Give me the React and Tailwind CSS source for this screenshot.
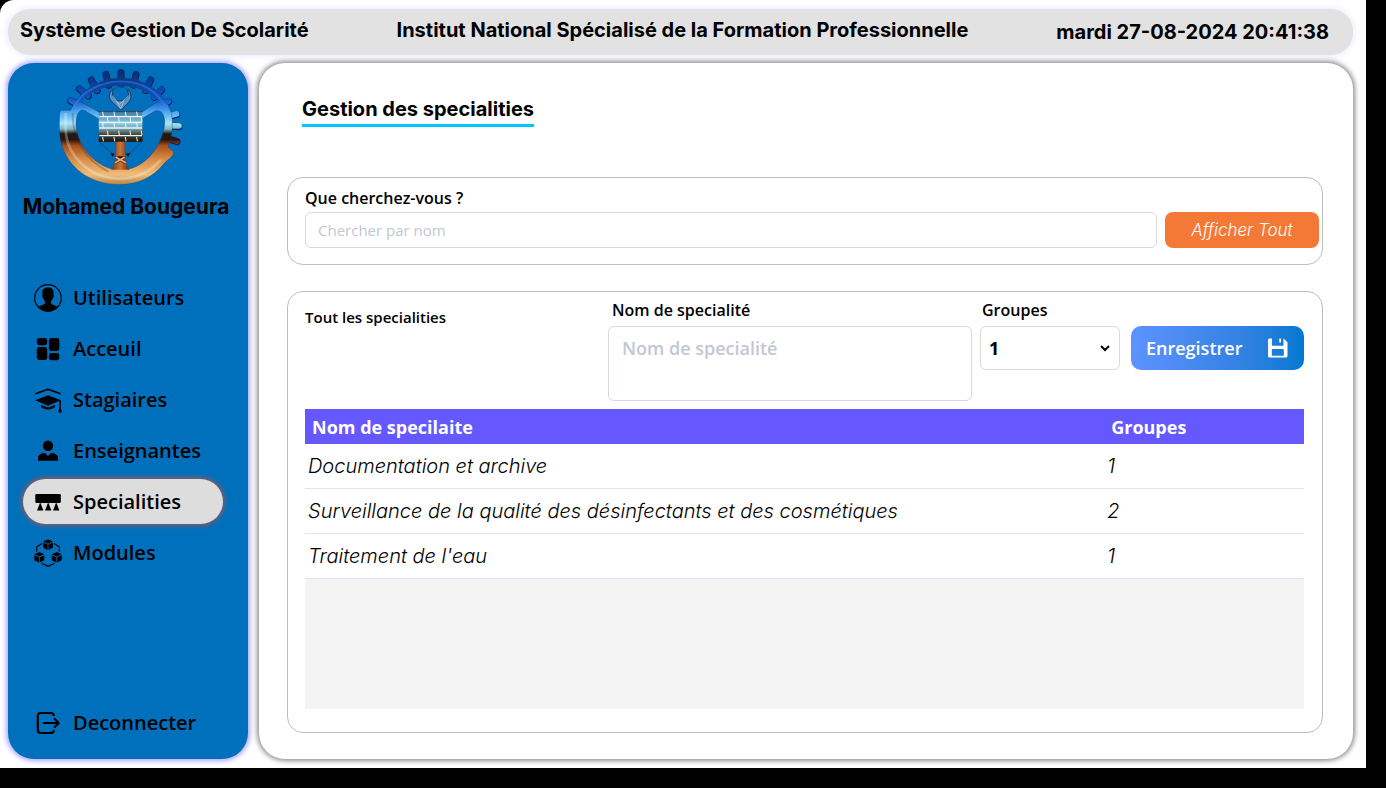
import { useState } from "react";

const gothic = "font-['Century_Gothic','Inter',sans-serif]";

const specialities = [
  { name: "Documentation et archive", groups: 1 },
  { name: "Surveillance de la qualité des désinfectants et des cosmétiques", groups: 2 },
  { name: "Traitement de l'eau", groups: 1 },
];

const teeth = [
  [62, 113, 92, 128], [88, 77, 114, 98], [124, 50, 141, 82], [168, 33, 175, 66],
  [213, 28, 213, 62], [258, 34, 250, 66], [302, 50, 286, 82], [335, 80, 312, 102],
  [356, 115, 330, 128], [380, 153, 352, 160], [387, 190, 358, 188], [381, 235, 352, 226],
];

const bricks = [150, 167, 184, 207, 226];

function Logo() {
  return (
    <svg viewBox="0 0 420 390" className="mr-4 h-[130px] w-[140px]" role="img" aria-label="Logo">
      <defs>
        <linearGradient id="metal" gradientUnits="userSpaceOnUse" x1="0" y1="20" x2="0" y2="370">
          <stop offset="0" stopColor="#0b2a66" />
          <stop offset="0.12" stopColor="#0a3f9c" />
          <stop offset="0.26" stopColor="#1258cc" />
          <stop offset="0.36" stopColor="#4aa4ee" />
          <stop offset="0.46" stopColor="#a5e6fa" />
          <stop offset="0.51" stopColor="#7fb3c0" />
          <stop offset="0.55" stopColor="#1d1a16" />
          <stop offset="0.6" stopColor="#2b150a" />
          <stop offset="0.65" stopColor="#a5501d" />
          <stop offset="0.76" stopColor="#d58a45" />
          <stop offset="0.9" stopColor="#f0bd7c" />
          <stop offset="1" stopColor="#a87a45" />
        </linearGradient>
        <linearGradient id="wall" gradientUnits="userSpaceOnUse" x1="0" y1="145" x2="0" y2="236">
          <stop offset="0" stopColor="#3f7397" />
          <stop offset="0.4" stopColor="#8fd0ea" />
          <stop offset="0.6" stopColor="#6d97a0" />
          <stop offset="0.75" stopColor="#4c4a3c" />
          <stop offset="1" stopColor="#17150f" />
        </linearGradient>
        <linearGradient id="trunk" x1="0" y1="0" x2="1" y2="0">
          <stop offset="0" stopColor="#7a3413" />
          <stop offset="0.5" stopColor="#c8763a" />
          <stop offset="1" stopColor="#6a2d10" />
        </linearGradient>
      </defs>
      {teeth.map(([x1, y1, x2, y2]) => (
        <g key={`${x1}-${y1}`} strokeLinecap="round">
          <line x1={x1} y1={y1 + 1} x2={x2 + 1} y2={y2 + 1} stroke="#0a2352" strokeWidth="21" />
          <line x1={x1} y1={y1 - 1} x2={x2} y2={y2} stroke="url(#metal)" strokeWidth="17" />
        </g>
      ))}
      <path
        fillRule="evenodd"
        fill="url(#metal)"
        stroke="#1b3f63"
        strokeOpacity="0.6"
        strokeWidth="2"
        d="M33 142 H62 C86 86 145 46 212 45 C285 46 344 86 364 150 C370 180 368 215 354 252 L371 265 C372 282 352 290 340 304 C308 344 262 365 207 365 C112 365 28 300 28 195 C28 170 28 142 33 142 Z
           M92 116 C120 84 160 68 210 68 C258 68 298 84 326 114 L278 146 H145 Z
           M88 146 C78 154 76 185 80 202 C90 255 132 302 184 318 C196 312 200 292 198 236 H148 V168 L112 148 C104 141 94 140 88 146 Z
           M338 152 C330 140 318 142 308 148 L277 166 V236 H225 C222 292 226 312 238 318 C288 304 322 262 338 212 C346 188 346 166 338 152 Z"
      />
      <path d="M70 132 C96 86 150 56 212 55 C275 56 325 84 350 140" fill="none" stroke="#3c8cf0" strokeOpacity="0.45" strokeWidth="5" />
      <path d="M47 150 V200 C50 280 120 346 207 347 C262 347 302 326 332 290" fill="none" stroke="#fff" strokeOpacity="0.28" strokeWidth="8" />
      <path d="M68 150 C66 225 105 290 175 326" fill="none" stroke="#3b1c0a" strokeOpacity="0.25" strokeWidth="6" />
      <path d="M198 232 H225 C221 270 224 302 238 320 H184 C198 304 201 270 198 232 Z" fill="url(#trunk)" />
      <rect x="146" y="145" width="131" height="91" fill="url(#wall)" />
      <path d="M146 145 H277" stroke="#27445e" strokeWidth="3" />
      {bricks.map((y, row) => (
        <g key={y} stroke="#eaf8ff" strokeWidth="4">
          {row < 4 && <line x1="148" x2="276" y1={y + 11} y2={y + 11} />}
          {[0, 1, 2, 3].map((c) => {
            const x = 158 + c * 34 + (row % 2) * 14;
            return <line key={c} x1={x} x2={x + 2} y1={y - 4} y2={y + 9} strokeWidth="3" />;
          })}
        </g>
      ))}
      <path d="M188 80 L213 68 L237 82" fill="none" stroke="#24486f" strokeWidth="2" />
      <path
        d="M189 78 C174 92 174 108 190 120 L208 138 H216 L233 121 C247 108 246 92 232 78 L236 98 L222 113 L200 114 L187 98 Z"
        fill="#5c8fc4"
        stroke="#1d3a63"
        strokeWidth="3"
      />
      <path d="M187 98 L208 124 L236 98 M200 114 L212 138 L222 113" fill="none" stroke="#b9d6ee" strokeWidth="2" />
      <path d="M148 238 L188 272 L207 292 M275 238 L238 272 L215 292" fill="none" stroke="#1c3c5e" strokeWidth="2" />
      <path d="M180 270 L194 272 L188 281 Z M227 272 L241 270 L235 281 Z M204 280 H218 V290 H204 Z" fill="#160d08" />
      <path d="M195 299 L224 283 M197 283 L228 299" stroke="#4b200c" strokeWidth="9" />
      <path d="M195 299 L224 283 M197 283 L228 299" stroke="#eeb278" strokeWidth="5" />
    </svg>
  );
}

const Icon = ({ children }) => (
  <svg viewBox="0 0 28 28" className="size-7 shrink-0" fill="currentColor" aria-hidden="true">
    {children}
  </svg>
);

function UserIcon() {
  return (
    <Icon>
      <circle cx="14" cy="14" r="13.3" fill="none" stroke="currentColor" strokeWidth="1.2" />
      <path d="M14 3.6c3.3 0 5.6 1.8 5.6 5 0 1.1-.1 1.6-.1 2.2.6.3.5 2.6-.6 3.1-.4 1.500-1 2.300-1.800 3v2.600c1.200 1.500 4.700 1.700 7 3.600A13.300 13.300 0 0 1 14 27.400 13.300 13.300 0 0 1 3.900 23.100c2.300-1.900 5.800-2.100 7-3.600v-2.600c-.8-.7-1.400-1.500-1.800-3-1.100-.5-1.200-2.800-.6-3.100 0-.6-.1-1.100-.1-2.200 0-3.200 2.300-5 5.600-5Z" />
    </Icon>
  );
}

function HomeIcon() {
  return (
    <Icon>
      <rect x="2.800" y="3" width="10.400" height="7.200" rx="2.400" />
      <rect x="2.800" y="12" width="10.400" height="13" rx="2.400" />
      <rect x="14.900" y="3" width="10.400" height="13" rx="2.400" />
      <rect x="14.900" y="18" width="10.400" height="7.200" rx="2.400" />
    </Icon>
  );
}

function StudentIcon() {
  return (
    <Icon>
      <path d="M1.500 7.800 14 3.300l12.600 4.500" fill="none" stroke="currentColor" strokeWidth="1.600" strokeLinejoin="round" />
      <path d="M1.200 14.300 14 9.200l12.800 5.100L14 19.700Z" />
      <path d="M7 18.900 14 21.500l7-2.600v2.200c-1.600 1.500-4 2.400-7 2.400s-5.400-.9-7-2.400Z" />
      <path d="M25.300 14.200h1.500v8.300l1 3.100c-.3.900-1 1.400-1.700 1.400s-1.400-.5-1.800-1.400l1-3.100Z" />
    </Icon>
  );
}

function TeacherIcon() {
  return (
    <Icon>
      <circle cx="14" cy="8.700" r="5.200" />
      <path d="M4 23.700v-2.800c0-2.900 3.600-4.900 6.600-5.100L14 19l3.400-3.200c3 .2 6.600 2.200 6.600 5.100v2.800Z" />
    </Icon>
  );
}

function SpecialityIcon() {
  return (
    <Icon>
      <rect x="1.300" y="6" width="25.500" height="9" rx="1.200" />
      <path d="M6.200 14.200 9.400 22.500H3Z M14.200 14.200l3.200 8.300H11Z M22.200 14.200l3.200 8.300H19Z" />
    </Icon>
  );
}

function Cube({ x, y }) {
  return (
    <g transform={`translate(${x} ${y})`}>
      <path d="M5 0l4.900 2.200L5 4.400.1 2.200Z" />
      <path d="M0 3.300l4.600 2v5.300L0 8.300Z" />
      <path d="M10 3.300l-4.600 2v5.300l4.600-2.300Z" />
    </g>
  );
}

function ModulesIcon() {
  return (
    <Icon>
      <path d="M8 4.500 2.700 7.700v5M20 4.500l5.300 3.200v5M7.500 24.200 14 27.300l6.500-3.100" fill="none" stroke="currentColor" strokeWidth="1.100" />
      <Cube x={9} y={0.300} />
      <Cube x={0.300} y={13} />
      <Cube x={17.700} y={13} />
    </Icon>
  );
}

function LogoutIcon() {
  return (
    <Icon>
      <g fill="none" stroke="currentColor" strokeWidth="2.200" strokeLinecap="round" strokeLinejoin="round">
        <path d="M19.800 6.200C19.500 4.500 18.500 4 16.500 4H7C4.800 4 3.800 5 3.800 7.200v13.600C3.800 23 4.800 24 7 24h9.500c2 0 3-.5 3.300-2.200" />
        <path d="M9.800 14H24.500M20.700 10l4 4-4 4" />
      </g>
    </Icon>
  );
}

const nav = [
  { label: "Utilisateurs", icon: UserIcon },
  { label: "Acceuil", icon: HomeIcon },
  { label: "Stagiaires", icon: StudentIcon },
  { label: "Enseignantes", icon: TeacherIcon },
  { label: "Specialities", icon: SpecialityIcon, active: true },
  { label: "Modules", icon: ModulesIcon },
];

function NavLink({ label, icon: Glyph, active }) {
  return (
    <a
      href="#"
      aria-current={active ? "page" : undefined}
      className={`flex h-[45px] w-[200px] items-center gap-[11px] rounded-full pl-[11px] text-xl font-semibold ${
        active ? "bg-[#dddddd] shadow-[0_0_4px_2px_#7d5a68]" : ""
      }`}
    >
      <Glyph />
      {label}
    </a>
  );
}

function Sidebar() {
  return (
    <aside className="flex w-60 shrink-0 flex-col rounded-[26px] bg-[#0070bd] pb-[14px] shadow-[0_0_5px_2px_#a9a6ff]">
      <div className="flex flex-col items-center">
        <Logo />
        <p className={`${gothic} mr-1 text-[21px] leading-7 font-bold whitespace-nowrap`}>Mohamed Bougeura</p>
      </div>
      <nav className="mt-[54px] flex flex-1 flex-col gap-[6px] pl-[15px]">
        {nav.map((item) => (
          <NavLink key={item.label} {...item} />
        ))}
        <div className="mt-auto">
          <NavLink label="Deconnecter" icon={LogoutIcon} />
        </div>
      </nav>
    </aside>
  );
}

export default function App() {
  const [query, setQuery] = useState("");
  const rows = specialities.filter((s) => s.name.toLowerCase().includes(query.toLowerCase()));

  return (
    <div className="flex min-h-screen bg-black pr-5 pb-5 font-['Segoe_UI','Open_Sans',sans-serif] text-black">
      <div className="flex min-w-0 flex-1 flex-col gap-2 rounded-tl-[14px] bg-white pt-[9px] pr-[13px] pb-[9px] pl-2">
        <header
          className={`${gothic} flex h-[46px] items-center justify-between rounded-[22px] bg-[#e2e2e2] pr-6 pl-3 text-xl font-bold whitespace-nowrap shadow-[0_0_6px_2px_#eef0ff]`}
        >
          <span className="pb-1">Système Gestion De Scolarité</span>
          <span className="pb-1">Institut National Spécialisé de la Formation Professionnelle</span>
          <time>mardi 27-08-2024 20:41:38</time>
        </header>

        <div className="flex flex-1 gap-[11px]">
          <Sidebar />

          <main className="flex min-w-0 flex-1 flex-col rounded-[26px] bg-white pt-[33px] pr-[30px] pb-[26px] pl-7 shadow-[0_0_5px_2px_#8f8f8f]">
            <h1 className={`${gothic} ml-[15px] w-[232px] border-b-[3px] border-[#00c8ff] pb-[2px] text-xl leading-[26px] font-bold whitespace-nowrap`}>
              Gestion des specialities
            </h1>

            <section className="mt-[50px] rounded-2xl border border-[#bdbdbd] pt-2 pr-[3px] pb-4 pl-[17px]">
              <label htmlFor="search" className="block text-base leading-6 font-semibold">
                Que cherchez-vous ?
              </label>
              <div className="mt-[2px] flex gap-2">
                <input
                  id="search"
                  type="text"
                  placeholder="Chercher par nom"
                  value={query}
                  onChange={(e) => setQuery(e.target.value)}
                  className="h-9 min-w-0 flex-1 rounded-[6px] border border-[#d5dadd] px-3 text-[15px] placeholder:text-[#c1c8d2]"
                />
                <button
                  type="button"
                  onClick={() => setQuery("")}
                  className={`${gothic} h-9 w-[154px] rounded-lg bg-[#f57936] pt-[2px] text-[17px] font-light text-white italic`}
                >
                  Afficher Tout
                </button>
              </div>
            </section>

            <section className="mt-[26px] flex flex-1 flex-col rounded-2xl border border-[#bdbdbd] pr-[18px] pb-[23px] pl-[17px]">
              <form className="flex items-start" onSubmit={(e) => e.preventDefault()}>
                <h2 className="flex-1 pt-[13px] text-[15px] leading-6 font-semibold">Tout les specialities</h2>
                <div className="w-[364px]">
                  <label htmlFor="name" className="block pt-[6px] pb-1 pl-1 text-base leading-6 font-semibold">
                    Nom de specialité
                  </label>
                  <textarea
                    id="name"
                    placeholder="Nom de specialité"
                    className="block h-[75px] w-full resize-none rounded-[6px] border border-[#d5dadd] px-[13px] py-[7px] text-lg font-semibold placeholder:text-[#c1c8d2]"
                  />
                </div>
                <div className="ml-2 w-[140px]">
                  <label htmlFor="groups" className="block pt-[6px] pb-1 pl-[2px] text-base leading-6 font-semibold">
                    Groupes
                  </label>
                  <div className="relative">
                    <select
                      id="groups"
                      className="block h-11 w-full appearance-none rounded-[6px] border border-[#d5dadd] bg-white pr-7 pl-2 text-lg font-bold"
                    >
                      <option>1</option>
                      <option>2</option>
                      <option>3</option>
                    </select>
                    <svg
                      viewBox="0 0 10 10"
                      className="pointer-events-none absolute top-[17px] right-[10px] size-[10px]"
                      fill="none"
                      stroke="currentColor"
                      strokeWidth="2"
                      aria-hidden="true"
                    >
                      <path d="M1 3l4 4 4-4" />
                    </svg>
                  </div>
                </div>
                <button
                  type="submit"
                  className="mt-[34px] ml-[11px] flex h-11 w-[173px] items-center justify-between rounded-[10px] bg-linear-to-r from-[#5d93ff] to-[#0078d2] px-[15px] text-lg font-semibold text-white"
                >
                  Enregistrer
                  <svg viewBox="0 0 22 22" className="size-[22px]" fill="currentColor" aria-hidden="true">
                    <path
                      fillRule="evenodd"
                      d="M2.500 1.500H5v6.300c0 .6.400 1 1 1h9.500c.6 0 1-.4 1-1V1.500l4 3.800v13.700c0 .8-.7 1.500-1.500 1.500H2.500c-.8 0-1.500-.7-1.500-1.500V3c0-.8.7-1.500 1.500-1.500ZM4.800 13v5.800h12V13c0-.6-.4-1-1-1h-10c-.6 0-1 .4-1 1Z"
                    />
                    <path d="M12.300 1.500h1.700v4h-1.700Z" />
                  </svg>
                </button>
              </form>

              <div className="mt-2 flex-1 bg-[#f4f4f4]">
                <table className="w-full table-fixed border-separate border-spacing-0 text-left">
                  <thead className="bg-[#6558ff] text-lg text-white">
                    <tr className="h-[35px]">
                      <th className="w-4/5 pl-[7px] font-bold">Nom de specilaite</th>
                      <th className="pl-[7px] font-bold">Groupes</th>
                    </tr>
                  </thead>
                  <tbody className={`${gothic} bg-white text-xl font-light italic`}>
                    {rows.map((row) => (
                      <tr key={row.name} className="h-[45px]">
                        <td className="border-b border-[#e3e0fa] pl-[3px]">{row.name}</td>
                        <td className="border-b border-[#e3e0fa] pl-[3px]">{row.groups}</td>
                      </tr>
                    ))}
                  </tbody>
                </table>
              </div>
            </section>
          </main>
        </div>
      </div>
    </div>
  );
}
